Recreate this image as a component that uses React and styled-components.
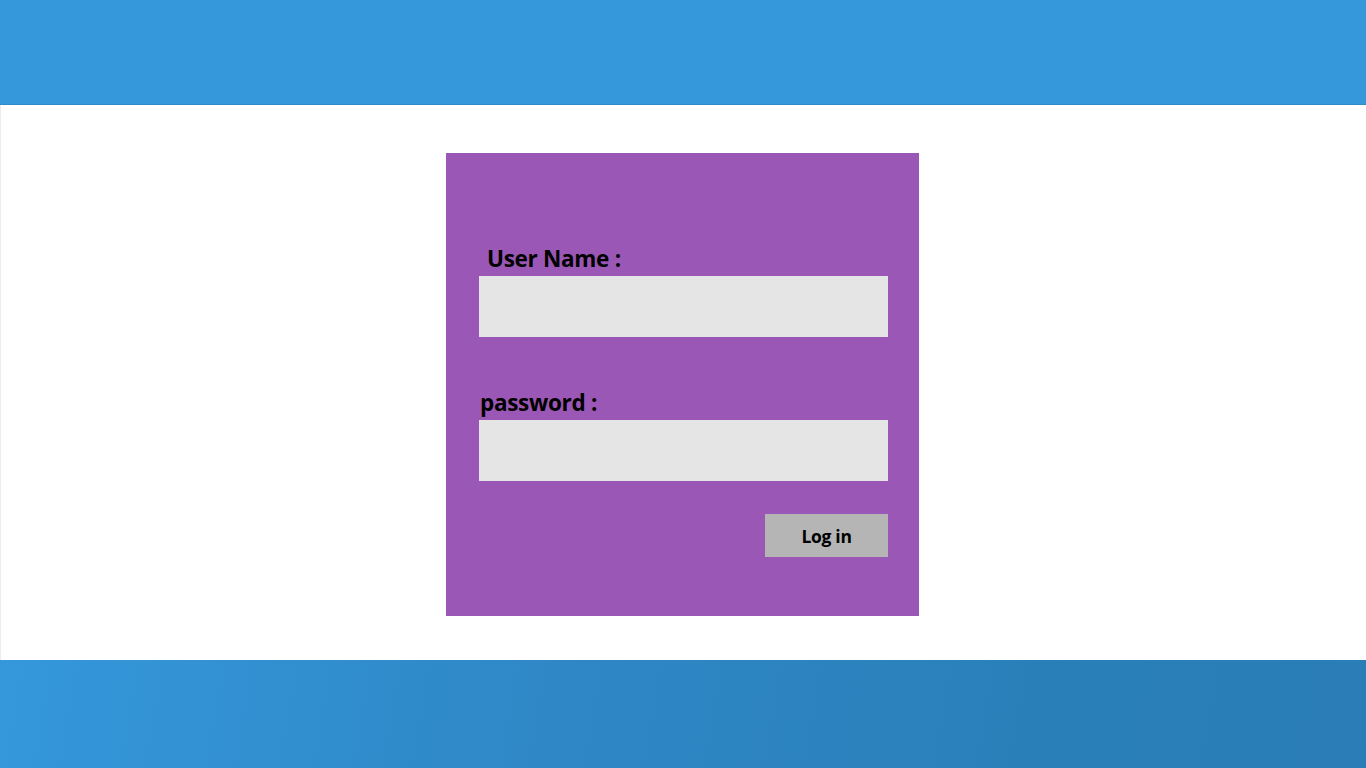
import React from "react";
import styled, { createGlobalStyle } from "styled-components";

const Global = createGlobalStyle`
  html, body { margin: 0; padding: 0; }
  body { font-family: "Open Sans", "Liberation Sans", sans-serif; background: #fff; }
`;

const Page = styled.div`
  display: flex;
  flex-direction: column;
  height: 768px;
  width: 1366px;
`;

const Header = styled.header`
  height: 104px;
  background: #3498db;
  border-bottom: 1px solid #2f8ccb;
`;

const Main = styled.main`
  flex: 1;
  display: flex;
  justify-content: center;
  align-items: flex-start;
  padding: 48px 1px 0 0;
  box-shadow: inset 1px 0 0 #ececec;
`;

const Card = styled.form`
  width: 473px;
  height: 463px;
  box-sizing: border-box;
  background: #9b57b5;
  padding: 93px 31px 0 33px;
  display: flex;
  flex-direction: column;
`;

const Label = styled.label`
  display: block;
  font-size: 22.5px;
  font-weight: 700;
  color: #000;
  line-height: 26px;
  padding-bottom: 4px;
  padding-left: ${(p) => p.$indent || 0}px;
  letter-spacing: -0.3px;
`;

const Input = styled.input`
  height: 61px;
  width: 409px;
  box-sizing: border-box;
  border: none;
  background: #e5e5e5;
  margin-bottom: ${(p) => p.$gap || 0}px;
  outline: none;
`;

const Actions = styled.div`
  display: flex;
  justify-content: flex-end;
  margin-top: 33px;
`;

const Button = styled.button`
  width: 123px;
  height: 43px;
  border: none;
  background: #b5b5b5;
  font-family: "Open Sans", "Liberation Sans", sans-serif;
  font-weight: 700;
  font-size: 17.5px;
  color: #000;
  cursor: pointer;
  letter-spacing: -0.3px;
`;

const Footer = styled.footer`
  height: 108px;
  background: linear-gradient(100deg, #3498db 0%, #2f87c6 40%, #2980b9 75%, #2a7db6 100%);
`;

export default function App() {
  return (
    <>
      <Global />
      <Page>
        <Header />
        <Main>
          <Card onSubmit={(e) => e.preventDefault()}>
            <Label $indent={8}>User Name :</Label>
            <Input $gap={53} type="text" />
            <Label $indent={1}>password :</Label>
            <Input type="password" />
            <Actions>
              <Button type="submit">Log in</Button>
            </Actions>
          </Card>
        </Main>
        <Footer />
      </Page>
    </>
  );
}
